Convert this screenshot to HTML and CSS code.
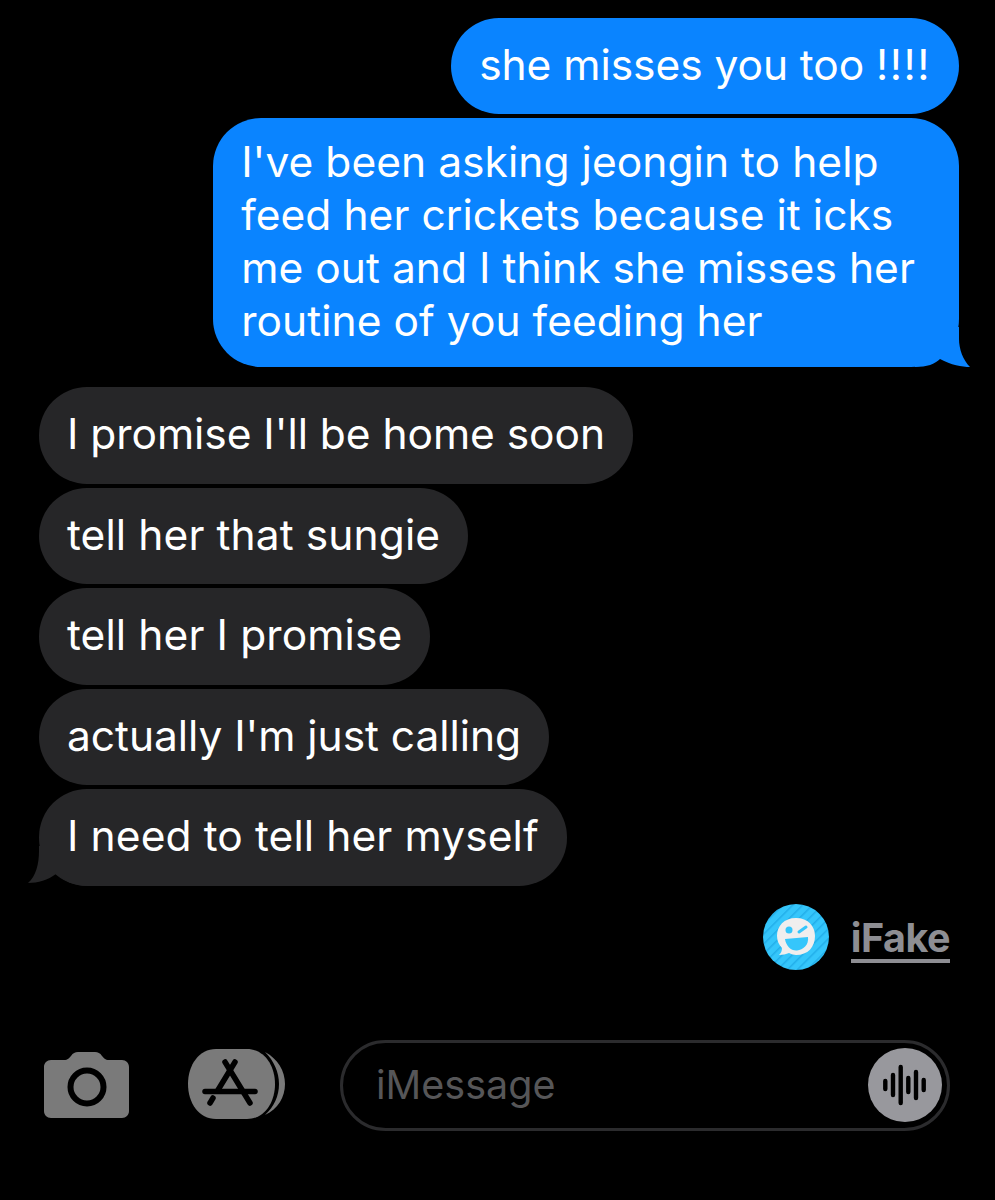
FILE: index.html
```html
<!DOCTYPE html>
<html lang="en">
<head>
<meta charset="utf-8">
<title>iMessage</title>
<link rel="stylesheet" href="styles.css">
</head>
<body>
<main class="screen">
  <section class="thread">
    <div class="bubble sent">she misses you too <span class="bangs">!!!!</span></div>
    <div class="bubble sent multi">I've been asking jeongin to help<br>feed her crickets because it icks<br>me out and I think she misses her<br>routine of you feeding her
      <svg class="tail tail-right" viewBox="0 0 56 40" aria-hidden="true"><path d="M0 0H44V12C44 22 48 33 55 40C47 40 36 38 25 32C20 37 12 40 0 40Z"/></svg>
    </div>
    <div class="group">
      <div class="bubble received">I promise I'll be home soon</div>
      <div class="bubble received loose">tell her that sungie</div>
      <div class="bubble received loose">tell her I promise</div>
      <div class="bubble received">actually I'm just calling</div>
      <div class="bubble received loose">I need to tell her myself
        <svg class="tail tail-left" viewBox="0 0 60 40" aria-hidden="true"><path d="M60 0H11V5C11 18 8 30 0 37C10 37 20 34 28 28C36 35 46 40 60 40Z"/></svg>
      </div>
    </div>
  </section>
  <div class="brand">
    <svg class="brand-logo" viewBox="0 0 66 66" aria-hidden="true">
      <defs>
        <pattern id="hatch" width="7" height="7" patternUnits="userSpaceOnUse" patternTransform="rotate(45)">
          <rect width="7" height="7" fill="#35c6fb"/>
          <rect width="1.500" height="7" fill="#22aeea"/>
        </pattern>
      </defs>
      <circle cx="33" cy="33" r="33" fill="url(#hatch)"/>
      <path d="M33 14C21 14 14 22 14 32C14 37 16 41 19 44C19 47 18 49 16 51C20 51 23 50 26 49C28 50 31 51 33 51C45 51 52 43 52 32C52 22 45 14 33 14Z" fill="#f0eeee"/>
      <circle cx="26" cy="26" r="3.500" fill="#35c6fb"/>
      <path d="M36 28L43 23" stroke="#35c6fb" stroke-width="3" stroke-linecap="round"/>
      <path d="M22 35L45 33C46 41 40 46 34 46.500C28 47 23 42 22 35Z" fill="#35c6fb"/>
    </svg>
    <span class="brand-name">iFake</span>
  </div>
  <footer class="composer">
    <svg class="camera" viewBox="0 0 85 66" aria-hidden="true">
      <path fill="#7a7a7a" d="M7 8H20C24 8 25 6 27 4C29 1 31 0 34 0H51C54 0 56 1 58 4C60 6 61 8 65 8H78C82 8 85 11 85 15V59C85 63 82 66 78 66H7C3 66 0 63 0 59V15C0 11 3 8 7 8Z"/>
      <circle cx="43" cy="35" r="16.500" fill="none" stroke="#000" stroke-width="6"/>
    </svg>
    <svg class="store" viewBox="0 0 97 70" aria-hidden="true">
      <path d="M77 3C90 10 97 22 97 35C97 48 90 60 77 66C86 58 91 47 91 35C91 23 86 12 77 3Z" fill="#7a7a7a"/>
      <path d="M28 0H59C76 0 87 16 87 35C87 54 76 70 59 70H28C11 70 0 54 0 35C0 16 11 0 28 0Z" fill="#7a7a7a"/>
      <g stroke="#000" stroke-width="5.500" stroke-linecap="round" fill="none">
        <path d="M37 13L62 54"/>
        <path d="M47 13L30 41"/>
        <path d="M17 42.500H67"/>
        <path d="M25 49L22 54"/>
      </g>
    </svg>
    <div class="field">
      <span class="placeholder">iMessage</span>
      <span class="mic">
        <svg class="wave" viewBox="0 0 44 42" aria-hidden="true">
          <g stroke="#000" stroke-width="4.400" stroke-linecap="round">
            <path d="M2.300 17V25M10 11V31M17.700 3V39M25.300 14V28M33 8V34M40.700 16V26"/>
          </g>
        </svg>
      </span>
    </div>
  </footer>
</main>
</body>
</html>
```

FILE: styles.css
```css
* { box-sizing: border-box; }
html, body { margin: 0; background: #000; }
body { width: 995px; height: 1200px; overflow: hidden; font-family: Inter, "Liberation Sans", sans-serif; }
.screen { display: flex; flex-direction: column; height: 1200px; padding-top: 18px; }
.thread { display: flex; flex-direction: column; align-items: flex-end; gap: 4px; padding: 0 36px 0 39px; }
.bubble {
  position: relative;
  isolation: isolate;
  width: fit-content;
  padding: 20px 28px 23px;
  border-radius: 48px;
  font-size: 42.500px;
  line-height: 53px;
  letter-spacing: -0.050px;
  color: #fff;
  white-space: nowrap;
}
.bangs { letter-spacing: 1.500px; }
.sent { background: #0a84ff; }
.multi { padding: 17px 44px 20px 28px; letter-spacing: 0.050px; }
.received { background: #262628; padding: 20px 28px; height: 96.500px; }
.loose { letter-spacing: 0.100px; }
.group { display: flex; flex-direction: column; align-items: flex-start; gap: 4px; width: 100%; margin-top: 16px; }
.tail { position: absolute; bottom: 0; height: 40px; z-index: -1; }
.tail-right { right: -12px; width: 56px; fill: #0a84ff; }
.tail-left { left: -11px; width: 60px; fill: #262628; }
.brand { display: flex; align-items: center; gap: 22px; align-self: flex-end; margin: 18px 45px 0 0; }
.brand-logo { width: 66px; height: 66px; }
.brand-name {
  margin-top: 6px;
  font-size: 39.500px;
  font-weight: 700;
  line-height: 42px;
  color: #8e8e93;
  border-bottom: 4px solid #8e8e93;
  letter-spacing: -0.500px;
}
.composer { display: flex; align-items: center; padding-left: 44px; margin-top: 70px; }
.camera { width: 85px; height: 66px; flex: none; }
.store { width: 97px; height: 70px; flex: none; margin: 0 0 2px 59px; }
.field {
  display: flex;
  align-items: center;
  justify-content: space-between;
  width: 610px;
  height: 91px;
  margin-left: 55px;
  padding: 0 5px 0 33px;
  border: 3px solid #2b2b2d;
  border-radius: 46px;
}
.placeholder { font-size: 39.500px; color: #565658; }
.mic { display: flex; align-items: center; justify-content: center; width: 74px; height: 74px; border-radius: 50%; background: #98989d; }
.wave { width: 44px; height: 42px; }
```
